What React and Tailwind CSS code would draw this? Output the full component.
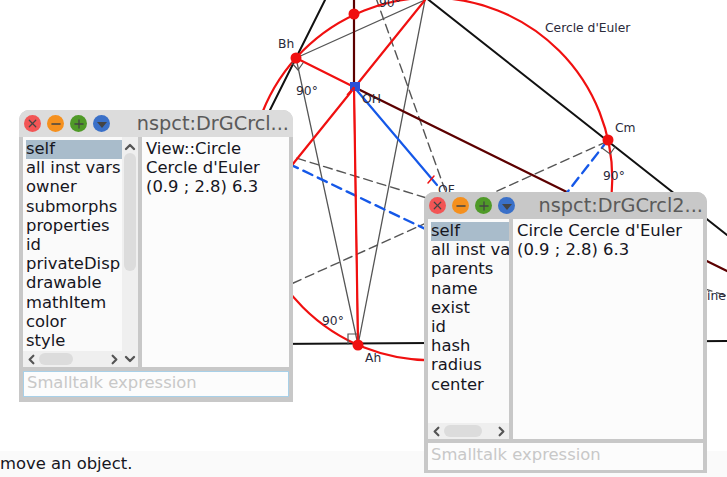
import { ChevronUp, ChevronDown, ChevronLeft, ChevronRight, X, Minus, Plus } from 'lucide-react';

const FONT = "font-['DejaVu_Sans',sans-serif]";

const TitleButton = ({ color, children }) => (
    <div className={`w-[17px] h-[17px] rounded-full flex items-center justify-center text-[#444] ${color}`}>
        {children}
    </div>
);

const ScrollBarH = ({ thumbClass }) => (
    <div className="flex items-center h-4 bg-[#efefef] shrink-0 relative">
        <ChevronLeft size={15} strokeWidth={3.5} className="text-[#555] shrink-0 ml-px" />
        <div className={`h-3 rounded-md bg-[#dcdcdc] ${thumbClass}`} />
        <div className="flex-1" />
        <ChevronRight size={15} strokeWidth={3.5} className="text-[#555] shrink-0" />
    </div>
);

const Window = ({ title, titleBg, rows, details, className, listWidth, vScroll, inputClass, thumbClass, panesHeight }) => (
    <div className={`absolute bg-[#c8c8c8] rounded-t-[10px] flex flex-col ${FONT} ${className}`}>
        <div className={`h-[27px] shrink-0 rounded-t-[10px] flex items-center pl-[5px] pr-1 ${titleBg}`}>
            <div className="flex gap-[6px]">
                <TitleButton color="bg-[#f25555]"><X size={13} strokeWidth={2.2} /></TitleButton>
                <TitleButton color="bg-[#f5901e]"><Minus size={14} strokeWidth={2.2} /></TitleButton>
                <TitleButton color="bg-[#4f9a28]"><Plus size={14} strokeWidth={2.2} /></TitleButton>
                <TitleButton color="bg-[#3a70c8]">
                    <div className="w-0 h-0 mt-[2px] border-x-[5px] border-x-transparent border-t-[6px] border-t-[#444]" />
                </TitleButton>
            </div>
            <div className="flex-1 text-right text-[19.3px] leading-[27px] text-[#5a5a5a] whitespace-nowrap overflow-hidden">{title}</div>
        </div>
        <div className={`flex gap-[4px] px-1 shrink-0 ${panesHeight}`}>
            <div className={`flex bg-[#fafafa] shrink-0 ${listWidth}`}>
                <div className="flex-1 min-w-0 flex flex-col">
                    <div className="flex-1 min-h-0 overflow-hidden pt-[3px] pl-[3px] text-[16.4px] leading-[17.6px] text-[#16161e]">
                        {rows.map((row, i) => (
                            <div key={row} className={`h-[19.2px] whitespace-nowrap ${i === 0 ? 'bg-[#a9bccb]' : ''}`}>{row}</div>
                        ))}
                    </div>
                    <ScrollBarH thumbClass={thumbClass} />
                </div>
                {vScroll && (
                    <div className="w-4 bg-[#efefef] flex flex-col items-center shrink-0">
                        <ChevronUp size={16} strokeWidth={3.5} className="text-[#555] shrink-0 mt-[2px]" />
                        <div className="w-3 h-[118px] mt-[-2px] rounded-md bg-[#dcdcdc]" />
                        <div className="flex-1" />
                        <ChevronDown size={16} strokeWidth={3.5} className="text-[#555] shrink-0" />
                    </div>
                )}
            </div>
            <div className="flex-1 bg-[#fcfcfc] pt-[2px] pl-1 text-[16.4px] leading-[19.2px] text-[#16161e]">
                {details.map(line => <div key={line} className="whitespace-nowrap">{line}</div>)}
            </div>
        </div>
        <div className={`mx-1 mt-[4px] bg-[#fcfcfc] pl-[3px] text-[16.4px] text-[#c8c8c8] whitespace-nowrap ${inputClass}`}>
            Smalltalk expression
        </div>
    </div>
);

const Geometry = () => (
    <svg width="727" height="451" className="block" fontFamily="DejaVu Sans, sans-serif" fontSize="12.3" fill="#2a2a3a">
        <g fill="none" strokeLinecap="round">
            {/* triangle sides */}
            <path d="M325 0 L240 170" stroke="#111" strokeWidth="2" />
            <path d="M425 -3 L727 235" stroke="#111" strokeWidth="2" />
            <path d="M270 344 L727 341" stroke="#111" strokeWidth="2" />
            {/* altitudes */}
            <path d="M296 58 L425 0 L358 345 Z" stroke="#555" strokeWidth="1.3" />
            {/* dashed */}
            <g stroke="#555" strokeWidth="1.4" strokeDasharray="9 5">
                <path d="M376 -2 L445 190" />
                <path d="M270 150 L430 199" />
                <path d="M280 289 L608 141" />
                <path d="M690 284 L727 296" />
            </g>
            {/* euler line parts */}
            <path d="M354 -2 L354 87 L727 271" stroke="#5c0000" strokeWidth="2.2" />
            <path d="M354 87 L437 185" stroke="#1558e8" strokeWidth="2.2" />
            <g stroke="#1558e8" strokeWidth="2.4" strokeDasharray="10 6">
                <path d="M260 150 L440 236" />
                <path d="M608 140 L555 208" />
            </g>
            {/* orthocentre lines */}
            <path d="M296 58 L354 87 M425 0 L280 180 M354 87 L358 345" stroke="#f01010" strokeWidth="2.2" />
            <path d="M428 183 L434 176" stroke="#f01010" strokeWidth="1.5" />
            {/* circle */}
            <circle cx="431" cy="179" r="181.3" stroke="#f01010" strokeWidth="2.2" />
            {/* right angle marks */}
            <path d="M292 63 L298 70 L303 63 M602 148 L610 154 L615 147 M348 344 L348 334 L358 334 L358 344" stroke="#555" strokeWidth="1.2" />
        </g>
        <rect x="350" y="82" width="10" height="9" fill="#2a50d8" />
        <path d="M354 87 L358 345 M354 87 L347 95" stroke="#f01010" strokeWidth="1.5" fill="none" />
        <circle cx="354" cy="14" r="5.5" fill="#f01010" />
        <circle cx="296" cy="58" r="5.5" fill="#f01010" />
        <circle cx="608" cy="140" r="5.5" fill="#f01010" />
        <circle cx="358" cy="345" r="5.5" fill="#f01010" />
        <text x="278" y="48">Bh</text>
        <text x="379" y="7">90°</text>
        <text x="296" y="95">90°</text>
        <text x="362" y="103">OH</text>
        <text x="545" y="32">Cercle d'Euler</text>
        <text x="615" y="132">Cm</text>
        <text x="603" y="180">90°</text>
        <text x="438" y="194">OF</text>
        <text x="322" y="325">90°</text>
        <text x="365" y="362">Ah</text>
        <text x="707" y="300">ine</text>
    </svg>
);

export default function App() {
    return (
        <div className="relative w-[727px] h-[477px] overflow-hidden bg-white flex flex-col">
            <Geometry />
            <div className={`h-[26px] bg-[#fafafa] text-[16.4px] leading-[26px] text-[#16161e] ${FONT}`}>move an object.</div>
            <Window
                title="nspct:DrGCrcl..."
                titleBg="bg-[#dcdcdc]"
                className="left-[19px] top-[110px] w-[274px] h-[292px]"
                listWidth="w-[115px]"
                panesHeight="h-[230px]"
                vScroll
                thumbClass="w-[34px]"
                inputClass="h-[26px] leading-[21px] border border-[#a8d0e8]"
                rows={['self', 'all inst vars', 'owner', 'submorphs', 'properties', 'id', 'privateDisp', 'drawable', 'mathItem', 'color', 'style']}
                details={['View::Circle', "Cercle d'Euler", '(0.9 ; 2.8) 6.3']}
            />
            <Window
                title="nspct:DrGCrcl2..."
                titleBg="bg-[#c8c8c8]"
                className="left-[424px] top-[192px] w-[283px] h-[281px]"
                listWidth="w-[81px]"
                panesHeight="h-[220px]"
                thumbClass="w-[38px]"
                inputClass="h-[27px] leading-[23px]"
                rows={['self', 'all inst vars', 'parents', 'name', 'exist', 'id', 'hash', 'radius', 'center']}
                details={["Circle Cercle d'Euler", '(0.9 ; 2.8) 6.3']}
            />
        </div>
    );
}
